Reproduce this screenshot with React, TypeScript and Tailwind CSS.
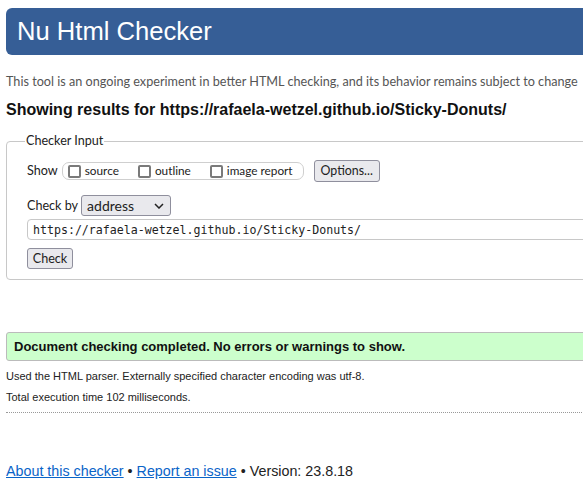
const sans = "font-['Liberation_Sans',Arial,sans-serif]";
const ui = "font-['Lato','Noto_Sans',sans-serif]";

function Box({ label }: { label: string }) {
  return (
    <label className="flex shrink-0 items-center gap-[4px] whitespace-nowrap">
      <span className="inline-block h-[13px] w-[13px] shrink-0 rounded-[2px] border-2 border-[#7a7a7a] bg-white" />
      <span>{label}</span>
    </label>
  );
}

export default function App() {
  return (
    <div className="h-[501px] w-full overflow-hidden bg-white text-[#222]">
      <div className="w-[660px] px-[6px] pt-[8px]">
        {/* header */}
        <header className="flex h-[47px] items-center rounded-[6px] bg-[#365e96] pl-[11px]">
          <h1 className={`${sans} text-[25.6px] leading-none text-white`}>Nu Html Checker</h1>
        </header>

        <p className={`${ui} mt-[19px] whitespace-nowrap text-[12.65px] leading-[16px] text-[#555]`}>
          This tool is an ongoing experiment in better HTML checking, and its behavior remains subject to change
        </p>

        <h2 className={`${sans} mt-[10px] text-[16px] font-bold leading-[20px] text-[#111]`}>
          Showing results for https://rafaela-wetzel.github.io/Sticky-Donuts/
        </h2>

        {/* checker input */}
        <fieldset className={`${ui} mt-[12px] rounded-[4px] border border-[#c8c8c8] pb-[10px] pl-[20px] text-[12.3px] leading-[16px] text-[#222]`}>
          <legend className="ml-[-2px] px-[1px] text-[12.6px] leading-[18px]">Checker Input</legend>

          <div className="mt-[10px] flex h-[22px] items-center">
            <span className="text-[12.6px]">Show</span>
            <div className="ml-[4px] flex h-[18px] w-[242px] shrink-0 items-center rounded-[7px] border border-[#cfcfcf] pl-[5px] text-[11.8px]">
              <Box label="source" />
              <span className="ml-[19px]"><Box label="outline" /></span>
              <span className="ml-[19px]"><Box label="image report" /></span>
            </div>
            <button className="ml-[10px] block h-[22px] w-[66px] shrink-0 rounded-[3px] border border-[#8f8f9d] bg-[#e9e9ed] text-[12.4px]">
              Options...
            </button>
          </div>

          <div className="mt-[13px] flex h-[21px] items-center">
            <span className="text-[12.6px]">Check by</span>
            <div className="ml-[3px] flex h-[21px] w-[90px] items-center justify-between rounded-[3px] border border-[#8f8f9d] bg-[#e9e9ed] pl-[5px] pr-[6px]">
              <span className="text-[14px] leading-none">address</span>
              <svg width="10" height="6" viewBox="0 0 10 6" fill="none">
                <path d="M1 1l4 4 4-4" stroke="#222" strokeWidth="1.5" />
              </svg>
            </div>
          </div>

          <div className="mt-[3px] flex h-[21px] items-center rounded-[4px] border border-[#c8c8c8] pl-[5px]">
            <span className="font-['DejaVu_Sans_Mono','Liberation_Mono',monospace] text-[11.6px]">
              https://rafaela-wetzel.github.io/Sticky-Donuts/
            </span>
          </div>

          <button className="mt-[8px] block h-[21px] w-[46px] rounded-[3px] border border-[#8f8f9d] bg-[#e9e9ed] text-[12.6px]">
            Check
          </button>
        </fieldset>

        {/* result */}
        <div className={`${sans} mt-[52px] flex h-[29px] items-center rounded-[3px] border border-[#bbb] bg-[#ccffcc] pl-[7px]`}>
          <p className="text-[13px] font-bold text-[#111]">Document checking completed. No errors or warnings to show.</p>
        </div>

        <div className={`${sans} text-[11px] leading-[21px] text-[#222]`}>
          <p className="mt-[5px]">Used the HTML parser. Externally specified character encoding was utf-8.</p>
          <p>Total execution time 102 milliseconds.</p>
        </div>

        <hr className="mt-[4px] border-0 border-t border-dotted border-[#999]" />

        <p className={`${sans} mt-[48px] text-[14.3px] leading-[20px] text-[#222]`}>
          <a className="text-[#0a64c8] underline">About this checker</a> •{" "}
          <a className="text-[#0a64c8] underline">Report an issue</a> • Version: 23.8.18
        </p>
      </div>
    </div>
  );
}
